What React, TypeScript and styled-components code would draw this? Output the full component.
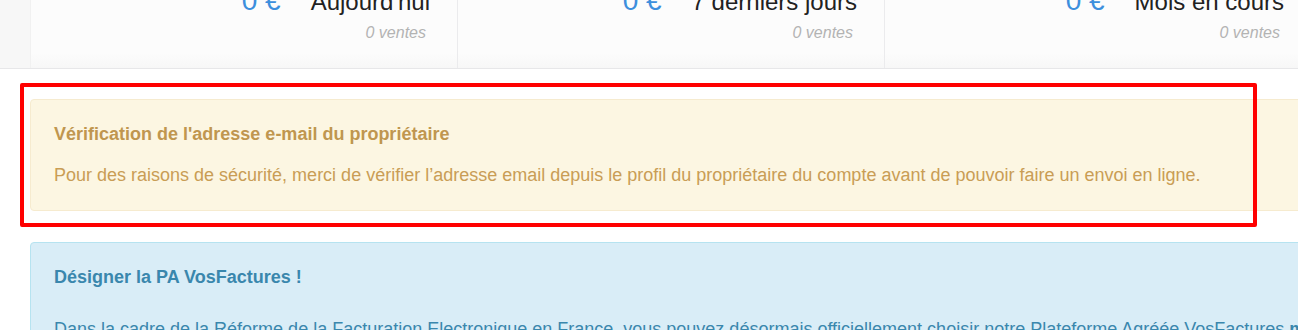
import React from "react";
import styled, { createGlobalStyle } from "styled-components";

const GlobalStyle = createGlobalStyle`
  html, body {
    margin: 0;
    padding: 0;
    background: #ffffff;
    overflow: hidden;
  }
  body {
    font-family: "Liberation Sans", Arial, Helvetica, sans-serif;
    color: #333333;
  }
`;

const Page = styled.div`
  position: relative;
  width: 100%;
  height: 330px;
  overflow: hidden;
`;

const StatsHeader = styled.div`
  margin-top: -14px;
  padding-left: 30px;
  background: #f7f7f7;
  border-bottom: 1px solid #e7e7e9;
  display: flex;
  overflow: hidden;
`;

const StatsCard = styled.div`
  display: flex;
  flex-shrink: 0;
  width: 1281px;
  background: linear-gradient(#fcfcfc 0%, #fcfcfc 82%, #f7f7f7 100%);
`;

const StatPanel = styled.div<{ $first?: boolean }>`
  box-sizing: border-box;
  width: 427px;
  flex-shrink: 0;
  border-left: 1px solid ${(p) => (p.$first ? "#f1f1f1" : "#ebebed")};
  padding: 0 27px 25px 0;
  text-align: right;
`;

const MainRow = styled.div`
  display: flex;
  justify-content: flex-end;
  align-items: baseline;
  gap: 30px;
  height: 30px;
`;

const Amount = styled.span`
  font-size: 28px;
  line-height: 30px;
  color: #3d8fdd;
`;

const Label = styled.span`
  font-size: 24px;
  line-height: 30px;
  color: #222222;
`;

const Sales = styled.div`
  margin-top: 7px;
  padding-right: 4px;
  font-size: 16px;
  line-height: 20px;
  font-style: italic;
  color: #b3b3b3;
`;

const Content = styled.div`
  padding: 30px 0 0 30px;
  margin-right: -80px;
`;

type Variant = "warning" | "info";

const palette: Record<Variant, { bg: string; border: string; title: string; text: string }> = {
  warning: { bg: "#fcf6e2", border: "#f6ebcf", title: "#c0964f", text: "#c99d55" },
  info: { bg: "#d9edf7", border: "#b6e3f0", title: "#3a87ad", text: "#3a87ad" },
};

const Alert = styled.div<{ $variant: Variant }>`
  box-sizing: border-box;
  background: ${(p) => palette[p.$variant].bg};
  border: 1px solid ${(p) => palette[p.$variant].border};
  border-radius: 4px;
  padding: 23px 23px 24px 23px;
  & + & {
    margin-top: 31px;
  }
`;

const AlertTitle = styled.div<{ $variant: Variant }>`
  font-size: 18px;
  line-height: 22px;
  font-weight: bold;
  color: ${(p) => palette[p.$variant].title};
`;

const AlertText = styled.p<{ $variant: Variant; $gap: number }>`
  margin: ${(p) => p.$gap}px 0 0 0;
  font-size: 18px;
  line-height: 22px;
  color: ${(p) => palette[p.$variant].text};
`;

const Highlight = styled.div`
  position: absolute;
  left: 20px;
  top: 83px;
  width: 1237px;
  height: 144px;
  box-sizing: border-box;
  border: 4px solid #ff0000;
  border-radius: 2px;
  pointer-events: none;
`;

const stats = [
  { label: "Aujourd'hui", amount: "0 €", sales: "0 ventes" },
  { label: "7 derniers jours", amount: "0 €", sales: "0 ventes" },
  { label: "Mois en cours", amount: "0 €", sales: "0 ventes" },
];

export default function App() {
  return (
    <Page>
      <GlobalStyle />
      <StatsHeader>
        <StatsCard>
          {stats.map((s, i) => (
            <StatPanel key={s.label} $first={i === 0}>
              <MainRow>
                <Amount>{s.amount}</Amount>
                <Label>{s.label}</Label>
              </MainRow>
              <Sales>{s.sales}</Sales>
            </StatPanel>
          ))}
        </StatsCard>
      </StatsHeader>
      <Content>
        <Alert $variant="warning">
          <AlertTitle $variant="warning">Vérification de l'adresse e-mail du propriétaire</AlertTitle>
          <AlertText $variant="warning" $gap={19}>
            Pour des raisons de sécurité, merci de vérifier l’adresse email depuis le profil du propriétaire du
            compte avant de pouvoir faire un envoi en ligne.
          </AlertText>
        </Alert>
        <Alert $variant="info">
          <AlertTitle $variant="info">Désigner la PA VosFactures !</AlertTitle>
          <AlertText $variant="info" $gap={30}>
            Dans la cadre de la Réforme de la Facturation Electronique en France, vous pouvez désormais
            officiellement choisir notre Plateforme Agréée VosFactures <b>ma</b>
          </AlertText>
        </Alert>
      </Content>
      <Highlight />
    </Page>
  );
}
